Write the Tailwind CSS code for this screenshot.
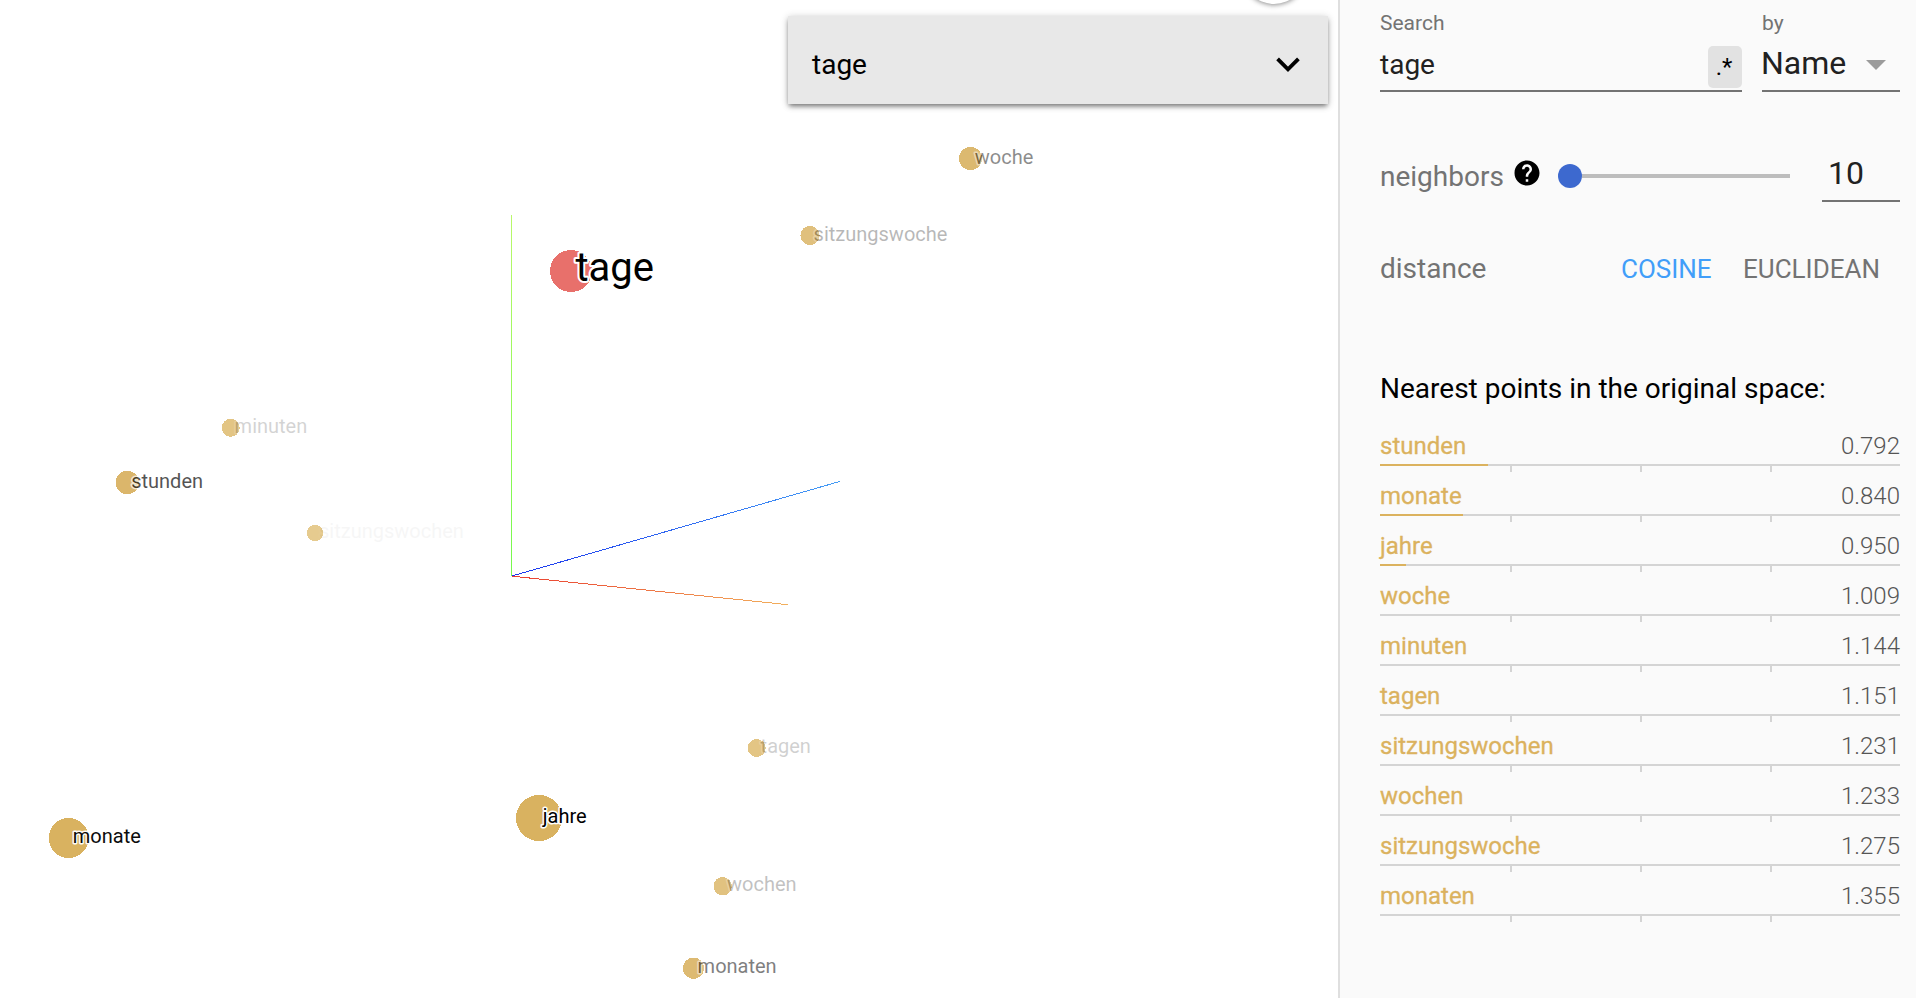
<!DOCTYPE html>
<html lang="de">
<head>
<meta charset="utf-8">
<title>Embedding Projector</title>
<script src="https://cdn.jsdelivr.net/npm/@tailwindcss/browser@4"></script>
</head>
<body class="flex h-[998px] w-[1916px] overflow-hidden bg-white font-['Roboto',sans-serif] text-black">
<main class="relative h-full w-[1338px] shrink-0 overflow-hidden bg-white">
  <svg class="block" width="1338" height="998" viewBox="0 0 1338 998">
    <defs>
      <linearGradient id="gx" gradientUnits="userSpaceOnUse" x1="512" y1="576" x2="788" y2="604"><stop offset="0" stop-color="#ea3d2f"/><stop offset="1" stop-color="#f2b05c"/></linearGradient>
      <linearGradient id="gy" gradientUnits="userSpaceOnUse" x1="511" y1="576" x2="511" y2="215"><stop offset="0" stop-color="#75f94c"/><stop offset="1" stop-color="#b9f86a"/></linearGradient>
      <linearGradient id="gz" gradientUnits="userSpaceOnUse" x1="512" y1="576" x2="840" y2="481"><stop offset="0" stop-color="#1a35ee"/><stop offset="1" stop-color="#459df5"/></linearGradient>
    </defs>
    <g shape-rendering="crispEdges">
      <line x1="511.5" y1="215" x2="511.5" y2="576" stroke="url(#gy)"/>
      <line x1="512" y1="576.2" x2="788" y2="604.7" stroke="url(#gx)"/>
      <line x1="512" y1="576" x2="840" y2="481.4" stroke="url(#gz)"/>
      <circle cx="315" cy="533" r="8.2" fill="#e6cb8f"/>
      <circle cx="230.7" cy="427.8" r="9" fill="#e3c584"/>
      <circle cx="756.7" cy="748" r="9" fill="#e3c584"/>
      <circle cx="722.7" cy="886.2" r="9.2" fill="#e1c280"/>
      <circle cx="810" cy="235.5" r="9.6" fill="#e0c07d"/>
      <circle cx="693.5" cy="968.3" r="10.6" fill="#ddba72"/>
      <circle cx="970.5" cy="158.5" r="11.5" fill="#dcb970"/>
      <circle cx="127.3" cy="482.5" r="11.7" fill="#dbb66b"/>
      <circle cx="68.7" cy="838" r="20" fill="#d9b260"/>
      <circle cx="539" cy="818" r="23" fill="#d9b260"/>
      <circle cx="571" cy="271" r="21" fill="#e8706b"/>
    </g>
    <g font-family="Roboto" font-size="20" stroke="#fff" stroke-width="3" stroke-linejoin="round" paint-order="stroke">
      <text x="319" y="538" opacity=".03">sitzungswochen</text>
      <text x="234.6" y="433" opacity=".17">minuten</text>
      <text x="760.6" y="753" opacity=".18">tagen</text>
      <text x="727" y="891" opacity=".24">wochen</text>
      <text x="813.6" y="241" opacity=".28">sitzungswoche</text>
      <text x="697.6" y="973" opacity=".5">monaten</text>
      <text x="974.8" y="164" opacity=".45">woche</text>
      <text x="131.2" y="488" opacity=".67">stunden</text>
      <text x="72.8" y="843" opacity=".95">monate</text>
      <text x="542.8" y="823">jahre</text>
      <text x="575.4" y="281" font-size="40" stroke-width="4">tage</text>
    </g>
  </svg>
  <div class="absolute left-[1242px] -top-[60px] size-16 rounded-full bg-white shadow-[0_1px_5px_rgba(0,0,0,0.45)]"></div>
  <div class="absolute left-[788px] top-4 flex h-[88px] w-[540px] items-center justify-between bg-[#e8e8e8] pl-6 pr-7 pt-[10px] shadow-[0_3px_5px_-1px_rgba(0,0,0,0.5),0_1px_8px_rgba(0,0,0,0.16)]">
    <span class="text-[28px] leading-8">tage</span>
    <svg width="24" height="16" viewBox="0 0 24 16" fill="none" stroke="#000" stroke-width="3.8"><path d="M1.6 1.8 12 12.4 22.4 1.8"/></svg>
  </div>
</main>
<aside class="flex h-full grow flex-col border-l-2 border-[#dfdfdf] bg-[#fafafa] pl-10 pr-4">
  <div class="flex gap-5 pt-[11px]">
    <div class="w-[362px]">
      <div class="h-6 text-[21px] leading-6 text-[#737373]">Search</div>
      <div class="flex h-[57px] items-start justify-between border-b-2 border-[#737373] pt-[11px]">
        <span class="mt-[3px] text-[28px] leading-8 text-[#212121]">tage</span>
        <span class="flex h-[42px] w-[34px] items-center justify-center rounded-[5px] bg-[#e2e2e2] pr-[2px] text-[24px]">.*</span>
      </div>
    </div>
    <div class="w-[138px]">
      <div class="h-6 text-[21px] leading-6 text-[#737373]">by</div>
      <div class="flex h-[57px] justify-between border-b-2 border-[#737373] pr-[14px] pt-[10px]">
        <span class="-ml-px text-[32px] leading-9 text-[#212121]">Name</span>
        <svg class="mt-[15px]" width="20" height="10" viewBox="0 0 20 10"><path d="M0 0h20L10 10z" fill="#9b9b9b"/></svg>
      </div>
    </div>
  </div>
  <div class="mt-[54px] flex h-14 items-start">
    <span class="w-[132px] pt-[15px] text-[28px] leading-8 text-[#737373]">neighbors</span>
    <svg class="mt-[12px]" width="30" height="30" viewBox="0 0 24 24"><path d="M12 2C6.48 2 2 6.48 2 12s4.48 10 10 10 10-4.48 10-10S17.52 2 12 2zm1 17h-2v-2h2v2zm2.07-7.75l-.9.92C13.45 12.9 13 13.5 13 15h-2v-.5c0-1.1.45-2.1 1.17-2.83l1.24-1.26c.37-.36.59-.86.59-1.41 0-1.1-.9-2-2-2s-2 .9-2 2H8c0-2.21 1.79-4 4-4s4 1.79 4 4c0 .88-.36 1.68-.93 2.25z"/></svg>
    <div class="ml-4 mt-[18px] flex h-6 w-[232px] items-center">
      <div class="size-6 rounded-full bg-[#3d69cf]"></div>
      <div class="h-1 grow bg-[#bdbdbd]"></div>
    </div>
    <div class="ml-auto h-14 w-[78px] border-b-2 border-[#737373] pl-[6px] pt-[9px] text-[32px] leading-9 text-[#212121]">10</div>
  </div>
  <div class="mt-[51px] flex h-8 text-[26px] leading-8 text-[#737373]">
    <span class="w-[241px] text-[28px]">distance</span>
    <span class="w-[122px] text-[#419ef9]">COSINE</span>
    <span>EUCLIDEAN</span>
  </div>
  <h2 class="mt-[88px] h-8 whitespace-nowrap text-[28px] leading-8">Nearest points in the original space:</h2>
  <div id="list" class="mt-[27px] flex flex-col"></div>
</aside>
<script>
const rows = [['stunden','0.792'],['monate','0.840'],['jahre','0.950'],['woche','1.009'],['minuten','1.144'],['tagen','1.151'],['sitzungswochen','1.231'],['wochen','1.233'],['sitzungswoche','1.275'],['monaten','1.355']];
const tick = '<div class="h-[6px] w-[130px] border-r-2 border-[#d4d4d4]"></div>';
document.getElementById('list').innerHTML = rows.map(([n, v]) => `
  <div class="h-[50px]">
    <div class="flex h-[32px] justify-between text-[24px] leading-7"><span class="text-[#dbb25e] [-webkit-text-stroke:0.3px_#dbb25e]">${n}</span><span class="font-light text-[#555]">${v}</span></div>
    <div class="h-[2px] bg-[#d4d4d4]"><div class="h-full bg-[#dbb25e]" style="width:${Math.max(0, 1 - v) * 100}%"></div></div>
    <div class="flex pl-[2px]">${tick}${tick}${tick}</div>
  </div>`).join('');
</script>
</body>
</html>
